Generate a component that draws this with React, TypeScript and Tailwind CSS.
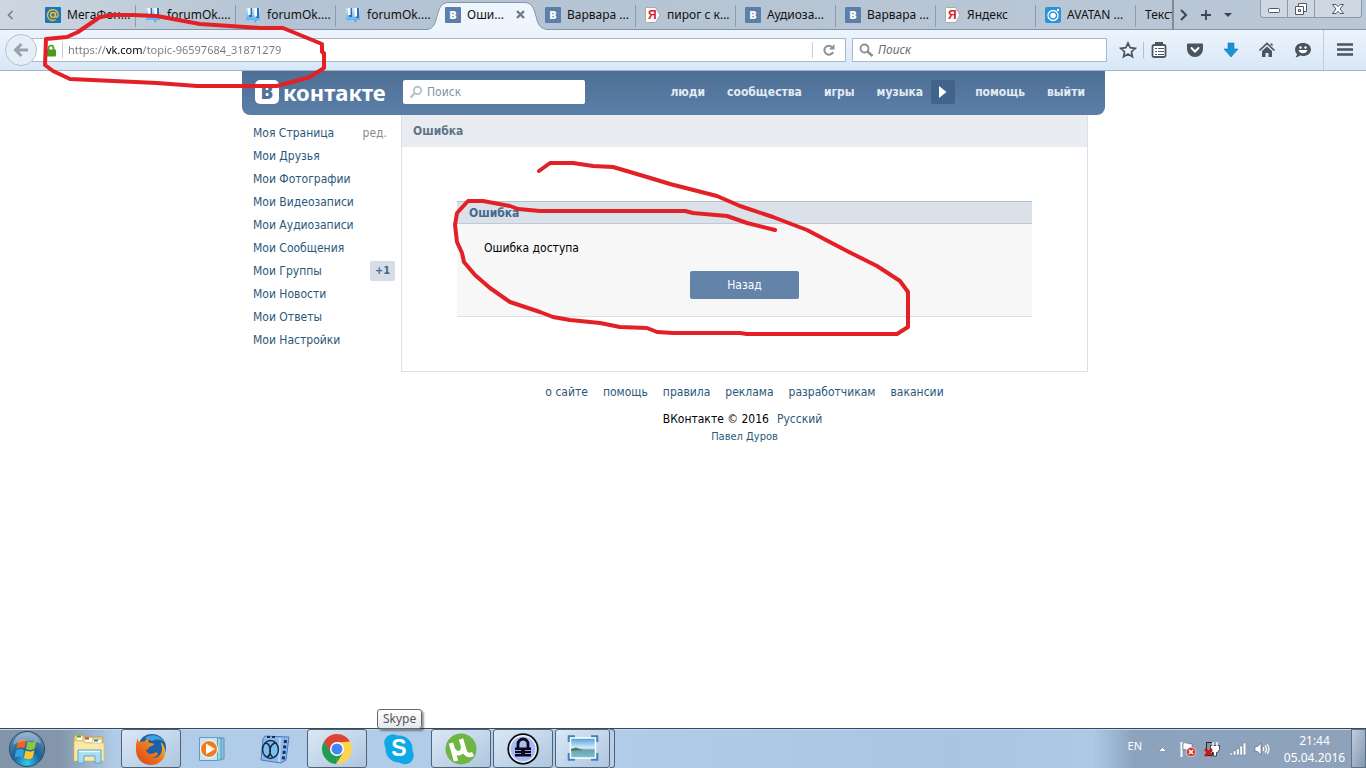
import React from "react";

type IconKind = "mail" | "forum" | "vk" | "yandex" | "avatan" | "none";

const tabs: { icon: IconKind; title: string; active?: boolean }[] = [
  { icon: "mail", title: "МегаФон..." },
  { icon: "forum", title: "forumOk...." },
  { icon: "forum", title: "forumOk...." },
  { icon: "forum", title: "forumOk...." },
  { icon: "vk", title: "Оши...", active: true },
  { icon: "vk", title: "Варвара ..." },
  { icon: "yandex", title: "пирог с к..." },
  { icon: "vk", title: "Аудиоза..." },
  { icon: "vk", title: "Варвара ..." },
  { icon: "yandex", title: "Яндекс" },
  { icon: "avatan", title: "AVATAN ..." },
];

const menu = [
  "Моя Страница",
  "Мои Друзья",
  "Мои Фотографии",
  "Мои Видеозаписи",
  "Мои Аудиозаписи",
  "Мои Сообщения",
  "Мои Группы",
  "Мои Новости",
  "Мои Ответы",
  "Мои Настройки",
];

const footerLinks = ["о сайте", "помощь", "правила", "реклама", "разработчикам", "вакансии"];

function Favicon({ kind }: { kind: IconKind }) {
  if (kind === "vk") {
    return (
      <span className="flex size-4 shrink-0 items-center justify-center rounded-[1px] bg-[#5b7fa8] font-['Noto_Sans',sans-serif] text-[11px] leading-none font-black text-white">
        B
      </span>
    );
  }
  if (kind === "yandex") {
    return (
      <span className="relative flex size-4 shrink-0 items-center pl-[3px] font-['Liberation_Sans',sans-serif] text-[12px] leading-none font-bold text-[#d8232a]">
        <svg className="absolute inset-0 size-4" viewBox="0 0 16 16" aria-hidden="true">
          <path d="M1.5.5h9l4.500 7.500-4.500 7.500h-9a1 1 0 0 1-1-1v-13a1 1 0 0 1 1-1z" fill="#fff" stroke="#a9a9a9" />
        </svg>
        <span className="relative">Я</span>
      </span>
    );
  }
  if (kind === "mail") {
    return (
      <svg className="size-4 shrink-0" viewBox="0 0 16 16" aria-hidden="true">
        <rect width="16" height="16" rx="1" fill="#1778bd" />
        <circle cx="8" cy="8" r="2.400" fill="none" stroke="#f5b82e" strokeWidth="1.500" />
        <path d="M10.500 5.500v3.700c0 1.700 2.800 1.300 2.800-1.200A5.400 5.400 0 1 0 11 12.500" fill="none" stroke="#f5b82e" strokeWidth="1.400" />
      </svg>
    );
  }
  if (kind === "forum") {
    return (
      <svg className="size-4 shrink-0" viewBox="0 0 16 16" aria-hidden="true">
        <defs>
          <linearGradient id="forum" x1="0" y1="0" x2="0" y2="1">
            <stop offset="0" stopColor="#cfe6fa" />
            <stop offset="1" stopColor="#3ea5ec" />
          </linearGradient>
        </defs>
        <path d="M1 1h14v12h-3l-2 3-1-3H1z" fill="url(#forum)" />
        <path d="M4 1h3v9H4zM11 1h3v10h-3z" fill="#2d6fb5" />
        <path d="M3 1h2.500v7H3zM9.500 1H12v8.500H9.500z" fill="#fff" />
      </svg>
    );
  }
  if (kind === "avatan") {
    return (
      <svg className="size-4 shrink-0" viewBox="0 0 16 16" aria-hidden="true">
        <rect width="16" height="16" rx="2" fill="#2a93d8" />
        <circle cx="8" cy="8.500" r="5" fill="none" stroke="#fff" strokeWidth="1.300" />
        <circle cx="8" cy="8.500" r="2.800" fill="#fff" />
        <circle cx="13" cy="3" r="1.200" fill="#fff" />
      </svg>
    );
  }
  return null;
}

function TabStrip() {
  return (
    <div className="flex h-[30px] border-b border-[#8494a6] bg-linear-to-r from-[#cdd7e1] via-[#b4c3d3] via-20% to-[#b9c7d6]">
      <button aria-label="Предыдущие вкладки" className="flex w-9 shrink-0 items-center pl-[6px]">
        <svg className="size-[10px]" viewBox="0 0 10 10" aria-hidden="true">
          <path d="M6.500 1L2.500 5l4 4" fill="none" stroke="#76818d" strokeWidth="1.700" />
        </svg>
      </button>
      <div className="flex min-w-0 flex-1 border-r-2 border-[#7d8b9a] text-[12px] text-[#111]">
        {tabs.map((t, i) => (
          <div key={i} className="relative flex w-[100px] shrink-0 items-center pl-[9px]">
            {t.active && (
              <svg className="absolute top-0 -left-[9px] h-[30px] w-[121px]" viewBox="0 0 121 30" aria-hidden="true">
                <path
                  d="M0 30V29.500C5 29 7 26 9 20C12 9 13 2.500 22 2.500H97C106 2.500 107 9 110 20C112 26 114 29 121 29.500V30Z"
                  fill="#eef5fc"
                />
                <path
                  d="M0 29.500C5 29 7 26 9 20C12 9 13 2.500 22 2.500H97C106 2.500 107 9 110 20C112 26 114 29 121 29.500"
                  fill="none"
                  stroke="#8494a6"
                />
              </svg>
            )}
            <a href="#tab" className="relative flex items-center gap-[6px] whitespace-nowrap">
              <Favicon kind={t.icon} />
              {t.title}
            </a>
            {t.active && (
              <button aria-label="Закрыть вкладку" className="relative ml-auto pr-[11px]">
                <svg className="size-[9px]" viewBox="0 0 9 9" aria-hidden="true">
                  <path d="M1 1l7 7M8 1L1 8" stroke="#6f7b88" strokeWidth="2.400" />
                </svg>
              </button>
            )}
            {!t.active && i !== 3 && <span className="absolute top-[5px] right-0 h-[22px] w-px bg-[#8d9cac]" />}
          </div>
        ))}
        <a href="#tab" className="flex min-w-0 flex-1 items-center overflow-hidden pl-[9px] whitespace-nowrap">
          Текст
        </a>
      </div>
      <div className="flex shrink-0 items-center gap-[10px] pl-[4px] text-[#333b45]">
        <button aria-label="Следующие вкладки">
          <svg className="size-3" viewBox="0 0 12 12" aria-hidden="true">
            <path d="M3 1l5 5-5 5" fill="none" stroke="#3c454f" strokeWidth="2" />
          </svg>
        </button>
        <button aria-label="Новая вкладка">
          <svg className="size-3" viewBox="0 0 12 12" aria-hidden="true">
            <path d="M6 1v10M1 6h10" stroke="#3c454f" strokeWidth="1.800" />
          </svg>
        </button>
        <button aria-label="Список вкладок">
          <svg className="size-3" viewBox="0 0 12 12" aria-hidden="true">
            <path d="M2 4h8L6 8z" fill="#3c454f" />
          </svg>
        </button>
      </div>
      <div className="mr-1 ml-[26px] flex h-[18px] w-[102px] shrink-0 divide-x divide-[#8e9aa8] rounded-b-[4px] border border-t-0 border-[#8e9aa8] bg-[#ced8e3]">
        <button aria-label="Свернуть" className="flex w-[27px] items-center justify-center">
          <svg className="size-[14px]" viewBox="0 0 14 14" aria-hidden="true">
            <rect x="1.500" y="6.500" width="11" height="4" rx="1" fill="#fff" stroke="#535666" />
          </svg>
        </button>
        <button aria-label="Восстановить" className="flex w-[27px] items-center justify-center">
          <svg className="size-[14px]" viewBox="0 0 14 14" aria-hidden="true">
            <path d="M4.500 1.500h8v8h-8z" fill="#fff" stroke="#535666" />
            <path d="M1.500 4.500h8v8h-8z" fill="#fff" stroke="#535666" />
            <path d="M4.500 7.500h2v2h-2z" fill="#ced8e3" stroke="#535666" />
          </svg>
        </button>
        <button aria-label="Закрыть" className="flex flex-1 items-center justify-center">
          <svg className="size-[14px]" viewBox="0 0 14 14" aria-hidden="true">
            <path d="M1.500 2.500h3.500l2 2.200 2-2.200h3.500L9 7l3.500 4.500H9l-2-2.200-2 2.200H1.500L5 7z" fill="#fff" stroke="#535666" />
          </svg>
        </button>
      </div>
    </div>
  );
}

function Toolbar() {
  return (
    <div className="flex h-[41px] items-center border-b border-[#a5b5c8] bg-linear-to-b from-[#edf4fc] to-[#d8e7f7] pl-[5px] text-[12px]">
      <button
        aria-label="Назад"
        className="z-10 flex size-8 shrink-0 items-center justify-center rounded-full border border-[#b5c1ce] bg-[#e6eef7]"
      >
        <svg className="size-4" viewBox="0 0 16 16" aria-hidden="true">
          <path d="M15 8H3M8.500 2L2.500 8l6 6" fill="none" stroke="#98a3ae" strokeWidth="3" />
        </svg>
      </button>
      <div className="-ml-2 flex h-6 flex-1 items-center border border-[#a9b8ca] bg-white pl-4">
        <svg className="h-[13px] w-[10px] shrink-0" viewBox="0 0 10 13" aria-hidden="true">
          <path d="M2.500 6V4a2.500 2.500 0 0 1 5 0v2" fill="none" stroke="#4b9a1c" strokeWidth="1.700" />
          <rect y="5.500" width="10" height="7" rx="1" fill="#4b9a1c" />
        </svg>
        <span className="ml-[6px] h-4 w-px bg-[#c9cdd2]" />
        <input
          aria-label="Адрес"
          defaultValue="https://vk.com/topic-96597684_31871279"
          className="ml-[5px] min-w-0 flex-1 bg-[linear-gradient(to_right,#777_0,#777_38px,#000_38px,#000_75px,#777_75px)] bg-clip-text text-[11px] text-transparent outline-none"
        />
        <span className="h-4 w-px bg-[#c9cdd2]" />
        <button aria-label="Обновить" className="flex w-8 items-center justify-center">
          <svg className="size-3" viewBox="0 0 12 12" aria-hidden="true">
            <path d="M9.500 3.500A4.500 4.500 0 1 0 10 8" fill="none" stroke="#8a9199" strokeWidth="2" />
            <path d="M11.500 0v5.500H6z" fill="#8a9199" />
          </svg>
        </button>
      </div>
      <label className="ml-[6px] flex h-6 w-[255px] shrink-0 items-center gap-[5px] border border-[#a9b8ca] bg-white pl-[6px]">
        <svg className="size-[14px] shrink-0" viewBox="0 0 14 14" aria-hidden="true">
          <circle cx="5.500" cy="5.500" r="4" fill="none" stroke="#8b8f94" strokeWidth="1.800" />
          <path d="M8.500 8.500l5 4.500" stroke="#8b8f94" strokeWidth="2.400" />
        </svg>
        <input
          aria-label="Поиск в сети"
          placeholder="Поиск"
          className="min-w-0 flex-1 italic outline-none placeholder:text-[#6d6d6d]"
        />
      </label>
      <div className="flex h-full shrink-0 items-center pl-3">
        <button aria-label="В закладки">
          <svg className="size-[18px]" viewBox="0 0 18 18" aria-hidden="true">
            <path d="M9 2l2.100 4.700 5.200.6-3.900 3.400 1.100 5L9 13.100l-4.500 2.600 1.100-5L1.700 7.300l5.200-.6z" fill="#fff" fillOpacity=".4" stroke="#4a5560" strokeWidth="1.700" />
          </svg>
        </button>
        <span className="ml-[6px] h-4 w-px bg-[#b6c1cd]" />
        <div className="flex gap-[18px] pl-[6px]">
          <button aria-label="Закладки">
            <svg className="size-[18px]" viewBox="0 0 18 18" aria-hidden="true">
              <path d="M6 3.500V2h6v1.500" stroke="#4a5560" strokeWidth="2" fill="none" />
              <rect x="2.500" y="4" width="13" height="12" rx="1.500" fill="#fff" stroke="#4a5560" strokeWidth="1.800" />
              <path d="M5 7.500h2M8 7.500h6M5 10.500h2M8 10.500h6M5 13.500h2M8 13.500h6" stroke="#4a5560" strokeWidth="1.100" />
            </svg>
          </button>
          <button aria-label="Pocket">
            <svg className="size-[18px]" viewBox="0 0 18 18" aria-hidden="true">
              <path d="M2 2.500h14a1 1 0 0 1 1 1V8A8 8 0 0 1 1 8V3.500a1 1 0 0 1 1-1z" fill="#4a5560" />
              <path d="M5.500 7L9 10.500 12.500 7" fill="none" stroke="#fff" strokeWidth="2" strokeLinecap="round" />
            </svg>
          </button>
          <button aria-label="Загрузки">
            <svg className="size-[18px]" viewBox="0 0 18 18" aria-hidden="true">
              <path d="M6 2h6v6h4l-7 8-7-8h4z" fill="#1b93d4" stroke="#1477b5" strokeWidth=".6" />
            </svg>
          </button>
          <button aria-label="Домой">
            <svg className="size-[18px]" viewBox="0 0 18 18" aria-hidden="true">
              <path d="M1.500 9.500L9 2.500l7.500 7" fill="none" stroke="#4a5560" strokeWidth="1.700" />
              <path d="M9 5.500l5 4.600V16h-3.500v-4h-3v4H4v-5.900z" fill="#4a5560" />
              <path d="M12.500 2.500h2v3l-2-2z" fill="#4a5560" />
            </svg>
          </button>
          <button aria-label="Чат">
            <svg className="size-[18px]" viewBox="0 0 18 18" aria-hidden="true">
              <path d="M9 2c4.500 0 8 2.700 8 6.500S13.500 15 9 15c-1 0-2-.1-2.900-.4C5 15.600 3 16.500 1.500 16c1-.8 1.500-1.700 1.600-2.900C1.800 11.900 1 10.300 1 8.500 1 4.700 4.500 2 9 2z" fill="#4a5560" />
              <circle cx="6.500" cy="6.500" r="1.200" fill="#fff" />
              <circle cx="11.500" cy="6.500" r="1.200" fill="#fff" />
              <path d="M4.500 9h9c-.5 2-2.300 3.300-4.500 3.300S5 11 4.500 9z" fill="#fff" />
            </svg>
          </button>
        </div>
        <span className="ml-[11px] h-full w-px bg-[#bfcddc]" />
        <button aria-label="Меню" className="px-3">
          <svg className="size-[18px]" viewBox="0 0 18 18" aria-hidden="true">
            <path d="M1 3.500h16M1 8.500h16M1 13.500h16" stroke="#4a5560" strokeWidth="2.600" />
          </svg>
        </button>
      </div>
    </div>
  );
}

function SiteHeader() {
  return (
    <header className="flex h-11 items-center rounded-b-[8px] bg-linear-to-b from-[#4e6f95] to-[#5b7fa8] pr-5 pb-[2px] pl-[13px]">
      <a
        href="#home"
        className="flex w-[148px] shrink-0 items-center gap-1 font-['Noto_Sans',sans-serif] text-[22px] leading-6 font-bold text-white"
      >
        <span className="flex size-6 items-center justify-center rounded-[5px] bg-white text-[19px] leading-none font-black text-[#50729a]">
          B
        </span>
        контакте
      </a>
      <label className="flex h-6 w-[182px] items-center gap-1 rounded-[2px] bg-white pl-[6px]">
        <svg className="size-[14px] shrink-0" viewBox="0 0 14 14" aria-hidden="true">
          <circle cx="8.500" cy="5.500" r="3.700" fill="none" stroke="#b9c3cd" strokeWidth="1.900" />
          <path d="M5.500 8.500L1.500 12.500" stroke="#b9c3cd" strokeWidth="2.400" />
        </svg>
        <input
          aria-label="Поиск по сайту"
          placeholder="Поиск"
          className="min-w-0 flex-1 outline-none placeholder:text-[#8494a8]"
        />
      </label>
      <nav className="ml-auto flex items-center font-bold text-[#e2ebf4]">
        <a href="#people">люди</a>
        <a href="#groups" className="ml-[22px]">сообщества</a>
        <a href="#games" className="ml-[22px]">игры</a>
        <a href="#music" className="ml-[22px]">музыка</a>
        <button aria-label="Слушать" className="ml-2 flex size-6 items-center justify-center rounded-[2px] bg-[#42648b]">
          <svg className="h-3 w-2" viewBox="0 0 8 12" aria-hidden="true">
            <path d="M0 0l7.500 6L0 12z" fill="#fff" />
          </svg>
        </button>
        <a href="#help" className="ml-5">помощь</a>
        <a href="#exit" className="ml-[22px]">выйти</a>
      </nav>
    </header>
  );
}

function Site() {
  return (
    <main className="flex flex-1 justify-center pr-[19px] font-['DejaVu_Sans_Condensed','Noto_Sans',sans-serif] text-[12px] leading-4">
      <div className="w-[863px]">
        <SiteHeader />
        <div className="flex pr-[17px]">
          <nav className="w-[159px] shrink-0 pt-[6px] pl-[11px] text-[#2b587a]">
            {menu.map((m, i) => (
              <div key={m} className="flex h-[23px] items-center justify-between pr-[6px]">
                <a href="#menu">{m}</a>
                {i === 0 && <a href="#edit" className="pr-2 text-[#8a8a8a]">ред.</a>}
                {m === "Мои Группы" && (
                  <span className="flex h-5 w-[25px] items-center justify-center rounded-[2px] bg-[#d5dde6] text-[11px] font-bold text-[#45688e]">
                    +1
                  </span>
                )}
              </div>
            ))}
          </nav>
          <div className="min-w-0 flex-1">
            <section className="border-x border-b border-[#dae1e8] pb-[54px]">
              <h1 className="flex h-8 items-center bg-[#e9edf1] pl-[11px] font-bold text-[#607387]">Ошибка</h1>
              <div className="mx-[55px] mt-[54px] border-t border-b border-t-[#b3bfcc] border-b-[#d9dfe4] bg-[#f7f7f7]">
                <h2 className="flex h-[22px] items-center border-b border-[#bfcad2] bg-[#dae1e8] pl-3 font-bold text-[#45688e]">
                  Ошибка
                </h2>
                <p className="pt-4 pl-[27px] text-black">Ошибка доступа</p>
                <div className="flex justify-center pt-[15px] pb-[17px]">
                  <button className="h-7 w-[109px] rounded-[2px] bg-[#6383a8] text-white">Назад</button>
                </div>
              </div>
            </section>
            <footer className="pt-3 text-center text-[#2b587a]">
              <nav className="flex justify-center gap-[15px]">
                {footerLinks.map((l) => (
                  <a key={l} href="#footer">{l}</a>
                ))}
              </nav>
              <p className="pt-[11px] pr-1 text-black">
                ВКонтакте © 2016
                <a href="#lang" className="ml-2 text-[#2b587a]">Русский</a>
              </p>
              <p className="pt-[2px] text-[11px]">
                <a href="#author">Павел Дуров</a>
              </p>
            </footer>
          </div>
        </div>
      </div>
    </main>
  );
}

function ExplorerIcon() {
  return (
    <svg className="size-8" viewBox="0 0 32 32" aria-hidden="true">
      <path d="M1 4l2-2h7l1 2h19v24H1z" fill="#e9cf7c" stroke="#b8963c" strokeWidth=".6" />
      <path d="M4 3h5v4H4zM12 5h7v4h-7zM20 7h8v4h-8z" fill="#fff" />
      <path d="M4 2.500h4v2H4z" fill="#3aa83a" />
      <path d="M12 4.500h4v2h-4z" fill="#cf4527" />
      <path d="M21 6.500h4v2h-4z" fill="#3880c4" />
      <path d="M1 8h9l2 2h19v18H1z" fill="#fae8a6" stroke="#d6b75d" strokeWidth=".6" />
      <path d="M5 17h23v13h-6v-7H11v7H5z" fill="#a9dcf2" stroke="#5ba5cf" />
      <path d="M6 18.500h21" stroke="#e7f7fd" strokeWidth="1.500" />
    </svg>
  );
}

function FirefoxIcon() {
  return (
    <svg className="size-8" viewBox="0 0 32 32" aria-hidden="true">
      <defs>
        <linearGradient id="fox" x1="0" y1="1" x2="1" y2="0">
          <stop offset="0" stopColor="#d8401c" />
          <stop offset=".55" stopColor="#ee7a1c" />
          <stop offset="1" stopColor="#ffd43a" />
        </linearGradient>
      </defs>
      <circle cx="17" cy="15" r="14" fill="#1f5fa6" />
      <path d="M10 5c5-5 16-3 19 4-4-3-8-3-12-1z" fill="#3fa2dc" />
      <path
        d="M3 5c0 2 0 3 1 4 2-1 4-1 5 0 1-2 3-3 5-4-1 2-1 3 0 5 2 0 4 0 5 1-1 2-3 2-5 3 0 2-1 2-3 3 1 4 5 5 8 3 2-1 4 0 4 1-1 2-4 4-7 4 6 1 11-3 11-9 0-3-1-5-1-7 4 4 5 9 4 13-2 6-7 10-14 10C7 32 1 25 1 17 1 12 1 9 3 5z"
        fill="url(#fox)"
      />
    </svg>
  );
}

function MediaIcon() {
  return (
    <svg className="size-8" viewBox="0 0 32 32" aria-hidden="true">
      <path d="M10 5h17v21H10z" fill="#8dc3dd" stroke="#4f96b8" />
      <path d="M7 5h17v22H7z" fill="#a5d3e8" stroke="#4f96b8" />
      <path d="M2.500 4.500h18v23h-18z" fill="#c7e4f2" stroke="#5b9fc0" />
      <circle cx="12" cy="16" r="8.500" fill="#f07a1c" stroke="#fff" />
      <path d="M9 10.500l9 5.500-9 5.500z" fill="#fff" />
    </svg>
  );
}

function FilmIcon() {
  return (
    <svg className="size-8" viewBox="0 0 32 32" aria-hidden="true">
      <path d="M6 3l24 1-3 23-5 3L2 27 4 6z" fill="#8fb8ea" stroke="#4a7cba" />
      <path d="M21 5l-1 24" stroke="#b9d6f6" strokeWidth="2" />
      <path d="M26.500 7l-2.300 20" stroke="#14305a" strokeWidth="3" strokeDasharray="3 2.500" />
      <path d="M8 4h8" stroke="#14305a" strokeWidth="2" strokeDasharray="3 2" />
      <ellipse cx="11.500" cy="16.500" rx="8" ry="9" fill="#7fbdea" stroke="#142c44" strokeWidth="1.500" />
      <path d="M6 10c6 0 7 12 2 14M17 9.500c-7 2-8 11-3 15" fill="none" stroke="#142c44" strokeWidth="1.600" />
    </svg>
  );
}

function ChromeIcon() {
  return (
    <svg className="size-8" viewBox="0 0 32 32" aria-hidden="true">
      <circle cx="16" cy="16" r="15" fill="#fcd44f" />
      <path d="M3 8.500A15 15 0 0 1 29 8.500L16 9.500 9.500 20z" fill="#db4437" />
      <path d="M3 8.500L10 20l6 3.500L15 31A15 15 0 0 1 3 8.500z" fill="#1f9d58" />
      <path d="M16 23l6-3-7 11z" fill="#1f9d58" />
      <circle cx="16" cy="16" r="7" fill="#fff" />
      <circle cx="16" cy="16" r="5.500" fill="#4285f4" />
    </svg>
  );
}

function SkypeIcon() {
  return (
    <span className="relative flex size-8 items-center justify-center font-['Liberation_Sans',sans-serif] text-[23px] leading-none font-bold text-white">
      <svg className="absolute inset-0 size-8" viewBox="0 0 32 32" aria-hidden="true">
        <circle cx="16" cy="16" r="13.500" fill="#0ca9e6" />
        <circle cx="10" cy="10" r="8.800" fill="#0ca9e6" />
        <circle cx="22" cy="22.500" r="8.800" fill="#0ca9e6" />
      </svg>
      <span className="relative">S</span>
    </span>
  );
}

function TorrentIcon() {
  return (
    <svg className="size-8" viewBox="0 0 32 32" aria-hidden="true">
      <circle cx="16" cy="16" r="15.500" fill="#6fb544" />
      <path d="M6 10l5 18M6.500 12c2 11 13 11 11.500 0M16 6l3 10c1 6 5 7 9 5" fill="none" stroke="#fff" strokeWidth="4.500" />
    </svg>
  );
}

function KeyIcon() {
  return (
    <svg className="size-8" viewBox="0 0 32 32" aria-hidden="true">
      <circle cx="16" cy="16" r="14.800" fill="#f4f6ff" stroke="#0a0a0a" strokeWidth="1.800" />
      <circle cx="16" cy="16" r="12.500" fill="#a9bcf5" />
      <path d="M11 15v-4a5 5 0 0 1 10 0v4" fill="none" stroke="#0a0a14" strokeWidth="2.800" />
      <path d="M8 14.500h16v9H8z" fill="#0a0a14" />
      <path d="M8 17.500h6M18 17.500h6M8 20.500h6M18 20.500h6" stroke="#8ea6ee" />
    </svg>
  );
}

function PictureIcon() {
  return (
    <svg className="size-8" viewBox="0 0 32 32" aria-hidden="true">
      <defs>
        <linearGradient id="photo" x1="0" y1="0" x2="0" y2="1">
          <stop offset="0" stopColor="#4a9ae0" />
          <stop offset=".5" stopColor="#d7effa" />
          <stop offset=".6" stopColor="#6f9fb0" />
          <stop offset="1" stopColor="#7cc4cc" />
        </linearGradient>
      </defs>
      <path d="M2 9V3.500h6M24 3.500h6V9M30 20v6.500h-6M8 26.500H2V20" fill="none" stroke="#3b83bd" strokeWidth="2.600" />
      <rect x="3.500" y="5" width="25" height="20" fill="url(#photo)" stroke="#fff" strokeWidth="1.500" />
      <path d="M4 16l5-1.500 7 2.500-12 1z" fill="#4c7d62" />
    </svg>
  );
}

const pinned: { name: string; icon: React.ReactNode; open: boolean }[] = [
  { name: "Проводник", icon: <ExplorerIcon />, open: false },
  { name: "Firefox", icon: <FirefoxIcon />, open: true },
  { name: "Медиаплеер", icon: <MediaIcon />, open: false },
  { name: "Видео", icon: <FilmIcon />, open: false },
  { name: "Chrome", icon: <ChromeIcon />, open: true },
  { name: "Skype", icon: <SkypeIcon />, open: false },
  { name: "Торрент", icon: <TorrentIcon />, open: true },
  { name: "Пароли", icon: <KeyIcon />, open: true },
];

const openButton =
  "flex h-full items-center justify-center rounded-[3px] border border-[#4f6377] bg-linear-to-br from-[#dbe8f5] to-[#aec6df]";

function Taskbar() {
  return (
    <div className="flex h-10 border-t border-[#36485c] bg-[linear-gradient(to_right,#8194a9_0,#8396ab_60px,#b1cce8_115px,#b1cce8_620px,#a9c5e3_70%,#adc9e6_80%,#8ca3bf_83%,#8ea2b9_100%)] shadow-[inset_0_1px_0_#c6d9ec]">
      <button aria-label="Пуск" className="flex w-[59px] shrink-0 items-center pl-2">
        <svg className="size-[38px]" viewBox="0 0 38 38" aria-hidden="true">
          <defs>
            <radialGradient id="orb" cx=".5" cy=".9" r=".9">
              <stop offset="0" stopColor="#38c6f0" />
              <stop offset=".45" stopColor="#176297" />
              <stop offset="1" stopColor="#6f93b5" />
            </radialGradient>
          </defs>
          <circle cx="19" cy="19" r="17.500" fill="url(#orb)" stroke="#294a6b" />
          <path d="M10 11c3-2 6-2 8-.5l-1.500 8c-2.500-1.500-5-1-8 .5z" fill="#ee6427" />
          <path d="M19.500 11c3 1.500 6 1.500 9-.5l-1.800 8c-3 2-6 2-8.700.5z" fill="#8cc63e" />
          <path d="M8 20.500c3-2 6-2 8-.5l-1.500 7.500c-2.500-1.500-5-1-8 .5z" fill="#35a1e0" />
          <path d="M17.500 20.500c3 1.500 6 1.500 9-.5l-1.800 7.500c-3 2-6 2-8.700.5z" fill="#fcc624" />
          <path d="M5 15C7 5 15 2 19 2s12 3 14 12C26 9 12 10 5 15z" fill="#fff" fillOpacity=".3" />
        </svg>
      </button>
      <div className="flex gap-[2px]">
        {pinned.map((p) => (
          <div key={p.name} className="relative w-[60px]">
            <button
              aria-label={p.name}
              className={p.open ? openButton + " w-full" : "flex h-full w-full items-center justify-center"}
            >
              {p.icon}
            </button>
            {p.name === "Skype" && (
              <span
                role="tooltip"
                className="absolute bottom-full left-2 rounded-[3px] border border-[#666] bg-linear-to-b from-white to-[#e6e8f1] px-[5px] text-[12px] leading-[18px] text-[#555] shadow-[2px_2px_2px_#0006]"
              >
                Skype
              </span>
            )}
          </div>
        ))}
        <div className="flex">
          <button aria-label="Просмотр фотографий" className={openButton + " w-[55px]"}>
            <PictureIcon />
          </button>
          <span className="h-full w-[5px] rounded-r-[3px] border border-l-0 border-[#4f6377] bg-[#b9cfe6]" />
        </div>
      </div>
      <div className="ml-auto flex items-center text-[12px] text-white">
        <span className="pb-1 text-[11px]">EN</span>
        <button aria-label="Скрытые значки" className="ml-4">
          <svg className="h-2 w-[9px]" viewBox="0 0 9 8" aria-hidden="true">
            <path d="M.5 6.500l4-4 4 4z" fill="#fff" stroke="#5a6b7e" strokeWidth=".5" />
          </svg>
        </button>
        <div className="flex gap-2 pl-[13px]">
          <svg className="size-4" viewBox="0 0 16 16" aria-hidden="true">
            <path d="M1.500 1v15" stroke="#fff" strokeWidth="2" />
            <path d="M3 2c4-1.500 5 2 9 .5v7c-4 1.500-5-2-9-.5z" fill="#fff" stroke="#4b5a6b" strokeWidth=".6" />
            <circle cx="11" cy="11" r="4.700" fill="#d3352b" stroke="#fff" strokeWidth=".6" />
            <path d="M9 9l4 4M13 9l-4 4" stroke="#fff" strokeWidth="1.500" />
          </svg>
          <svg className="size-4" viewBox="0 0 16 16" aria-hidden="true">
            <path d="M2.500 1.500h6v13h-6z" fill="#8794a2" stroke="#1e2730" />
            <path d="M6.500 4.500h9v4l-2 3h-1v3.500h-3v-3.500h-1l-2-3z" fill="#fff" stroke="#222c37" strokeWidth=".8" />
            <path d="M9 1v4M13 1v4" stroke="#fff" strokeWidth="1.500" />
            <path d="M1 8l7 7M8 8l-7 7" stroke="#cf1111" strokeWidth="2.500" />
          </svg>
          <svg className="ml-[2px] size-4" viewBox="0 0 16 16" aria-hidden="true">
            <path d="M0 12h2.600v2H0zM3.300 10h2.600v4H3.300zM6.600 8h2.600v6H6.600zM9.900 5h2.600v9H9.900zM13.200 2h2.600v12h-2.600z" fill="#fff" stroke="#5a6b7e" strokeWidth=".4" />
          </svg>
          <svg className="size-4" viewBox="0 0 16 16" aria-hidden="true">
            <path d="M1 5.500h2.500L7 2v12l-3.500-3.500H1z" fill="#fff" stroke="#5a6b7e" strokeWidth=".7" />
            <path d="M9 6q1.500 2 0 4M11 4.500q3 3.500 0 7M13 3q4 5 0 10" fill="none" stroke="#fff" strokeWidth="1.200" />
          </svg>
        </div>
        <time className="w-[81px] pl-2 text-center leading-[17px] whitespace-nowrap">
          21:44
          <br />
          05.04.2016
        </time>
        <button
          aria-label="Показать рабочий стол"
          className="h-full w-[15px] border border-[#5d7086] bg-linear-to-br from-[#c2cedb] to-[#8197b0]"
        />
      </div>
    </div>
  );
}

export default function App() {
  return (
    <div className="relative flex min-h-screen flex-col overflow-hidden bg-white font-['Noto_Sans',sans-serif]">
      <TabStrip />
      <Toolbar />
      <Site />
      <Taskbar />
      <svg
        className="pointer-events-none absolute top-0 left-0 z-20 h-[350px] w-[920px]"
        viewBox="0 0 920 350"
        fill="none"
        stroke="#e32026"
        strokeWidth="4"
        strokeLinecap="round"
        strokeLinejoin="round"
        aria-hidden="true"
      >
        <path d="M100 17L113 15H133L157 16L173 19L200 24L230 26L260 28H283L300 35L322 44V52L324 53V68L310 77L277 86H197L157 83L70 79L53 71L45 65L46 39L67 37L78 32Z" />
        <path d="M539 171L550 163L573 163L593 166L613 167L647 177L670 184L717 196L740 206L773 217L807 230L847 251L877 266L900 281L908 292V327L897 334H747L740 333H673L657 332L647 328L620 327L600 323L570 320L553 317L540 312L510 302L490 288L475 275L464 262L462 253L457 242L455 225L457 213L468 201H483L510 206L518 209L540 211H685L693 213L727 216L747 223L775 230" />
      </svg>
    </div>
  );
}
